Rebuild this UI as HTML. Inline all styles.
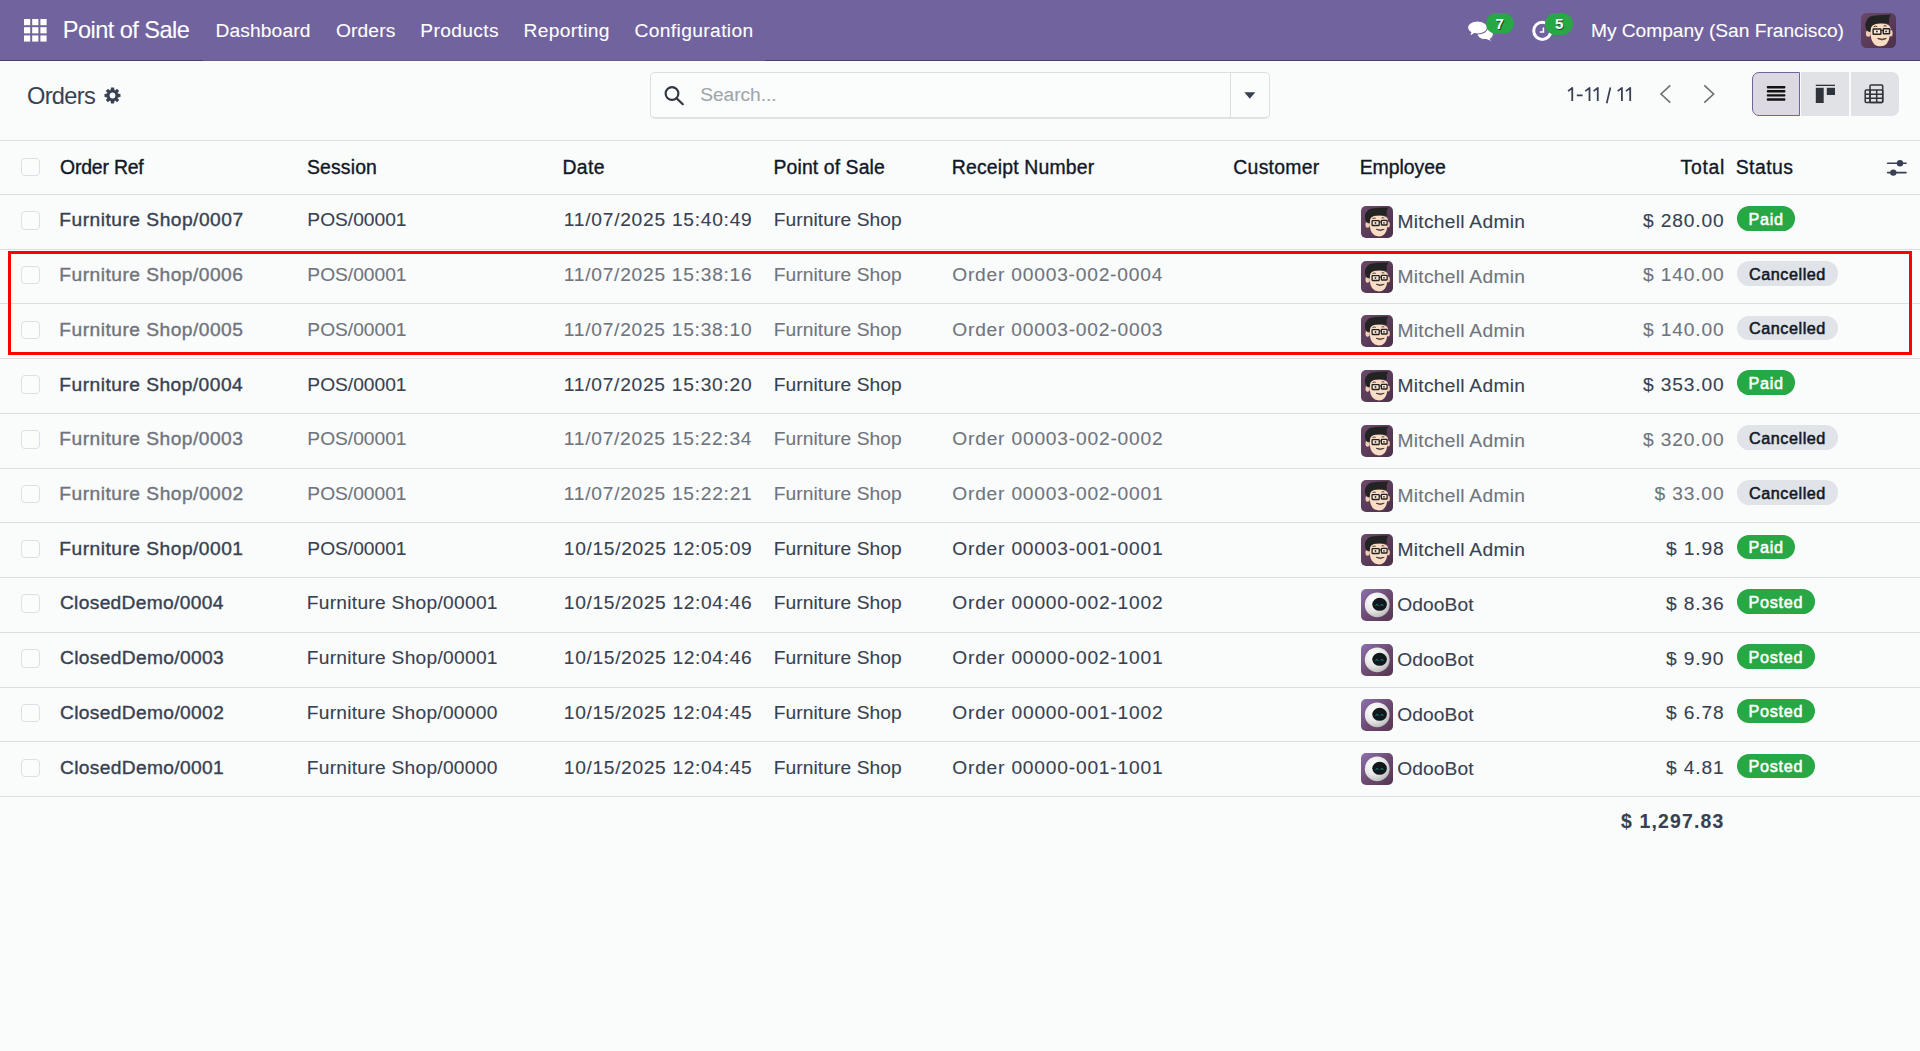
<!DOCTYPE html>
<html><head><meta charset="utf-8">
<style>
*{box-sizing:border-box;margin:0;padding:0}
html,body{width:1920px;height:1051px;overflow:hidden;background:#fafbfb;font-family:"Liberation Sans",sans-serif;position:relative}
.t{position:absolute;white-space:nowrap;line-height:40px;height:40px}
#nav{position:absolute;left:0;top:0;width:1920px;height:61px;background:#71639e}
#nav .bl{position:absolute;top:60px;height:1px}
.line{position:absolute;left:0;width:1920px;height:1px;background:#dcdee3}
.cb{position:absolute;left:21.2px;width:18.4px;height:18.4px;border:1.5px solid #dcdfe4;border-radius:4px;background:#fbfcfc}
.av{position:absolute;left:1360.7px;width:32px;height:32px}
.badge{position:absolute;left:1737px;height:24.6px;border-radius:12.3px;font-weight:700;font-size:16.2px;line-height:24.6px;text-align:center;white-space:nowrap}
.badge.paid{width:58px;background:#28a745;color:#fff}
.badge.posted{width:77.6px;background:#28a745;color:#fff}
.badge.cancelled{width:101px;background:#e0e3e7;color:#111827}
#redbox{position:absolute;left:8px;top:251px;width:1904px;height:104px;border:3px solid #ff0000}
.vs{position:absolute;top:72px;height:44px;background:#e0e2e6}
</style></head><body>
<svg width="0" height="0" style="position:absolute">
<defs>
<linearGradient id="gm" x1="0" y1="0" x2="1" y2="1"><stop offset="0" stop-color="#6a4869"/><stop offset="1" stop-color="#4c3049"/></linearGradient>
<linearGradient id="gb" x1="0" y1="0" x2="1" y2="1"><stop offset="0" stop-color="#8d72b0"/><stop offset="0.5" stop-color="#6d4b73"/><stop offset="1" stop-color="#56354f"/></linearGradient>
<radialGradient id="gh" cx="0.35" cy="0.3" r="0.75"><stop offset="0" stop-color="#ffffff"/><stop offset="0.6" stop-color="#e6e6e6"/><stop offset="1" stop-color="#b9b9b9"/></radialGradient>
<symbol id="mit" viewBox="0 0 32 32">
<rect x="0" y="0" width="32" height="32" rx="5" fill="url(#gm)"/>
<ellipse cx="6.6" cy="18.8" rx="2.1" ry="3" fill="#f3cdb1"/>
<ellipse cx="27.3" cy="18.5" rx="1.6" ry="2.9" fill="#f3cdb1"/>
<path d="M8.4 12 Q7.9 26.5 13.8 29.6 Q17.3 31 21 30 Q26.8 27.5 27 14 Q26.8 9.5 17.5 9.5 Q9 9.5 8.4 12 Z" fill="#f9dcc4"/>
<path d="M4 9.5 Q5.5 3.5 11 2.6 Q18 1.6 27.2 1.6 Q26.6 3.8 25.6 4.8 Q26.2 8 25.4 10 Q21 8.6 15 9.6 Q10.5 10.6 9.3 13 Q8.8 15.5 8.6 17.5 Q6.2 17 5.4 16 Q3.4 13 4 9.5 Z" fill="#232323"/>
<path d="M11.5 12.6 Q13.2 11.6 14.8 12.4 M20.6 12 Q22 11.3 23.3 12.1" stroke="#3a3030" stroke-width="0.9" fill="none"/>
<rect x="11.1" y="14.6" width="7.1" height="4.9" rx="0.5" fill="#fff6ee" fill-opacity="0.5" stroke="#222" stroke-width="1.3"/>
<rect x="20.4" y="14.4" width="5.7" height="4.6" rx="0.5" fill="#fff6ee" fill-opacity="0.4" stroke="#222" stroke-width="1.3"/>
<path d="M18.2 16 L20.4 16" stroke="#222" stroke-width="1"/>
<circle cx="14.5" cy="17" r="0.9" fill="#333"/><circle cx="23" cy="16.8" r="0.9" fill="#333"/>
<path d="M15.2 23.3 Q19.2 26 23.2 23.3 Q19.2 24.5 15.2 23.3 Z" fill="#fff" stroke="#4a3b3b" stroke-width="0.9"/>
</symbol>
<symbol id="bot" viewBox="0 0 32 32">
<rect x="0" y="0" width="32" height="32" rx="5" fill="url(#gb)"/>
<circle cx="16.2" cy="15.8" r="12.4" fill="url(#gh)"/>
<ellipse cx="18.6" cy="15.3" rx="7.3" ry="6.5" fill="#12171b"/>
<path d="M14.8 16.6 Q16 14.2 17.2 16.6" fill="none" stroke="#17b5a6" stroke-width="1"/>
<path d="M19.8 16.6 Q21 14.2 22.2 16.6" fill="none" stroke="#17b5a6" stroke-width="1"/>
</symbol>
</defs></svg>

<div id="nav">
  <div class="bl" style="left:0;width:203px;background:#4b3f72"></div>
  <div class="bl" style="left:203px;width:562px;background:#65598f"></div>
  <div class="bl" style="left:765px;width:1155px;background:#4b3f72"></div>
</div>
<!-- grid icon -->
<svg style="position:absolute;left:24px;top:19px" width="23" height="23" viewBox="0 0 23 23" fill="#fff">
<rect x="0" y="0" width="6.2" height="6.2"/><rect x="8.2" y="0" width="6.2" height="6.2"/><rect x="16.4" y="0" width="6.2" height="6.2"/>
<rect x="0" y="8.2" width="6.2" height="6.2"/><rect x="8.2" y="8.2" width="6.2" height="6.2"/><rect x="16.4" y="8.2" width="6.2" height="6.2"/>
<rect x="0" y="16.4" width="6.2" height="6.2"/><rect x="8.2" y="16.4" width="6.2" height="6.2"/><rect x="16.4" y="16.4" width="6.2" height="6.2"/>
</svg>
<!-- chat icon -->
<svg style="position:absolute;left:1466px;top:18px" width="30" height="26" viewBox="0 0 30 26">
<path d="M17 10 C24 9.5 28 13 27.5 16.5 C27.3 18.5 26 20 24.5 21 L26.8 23.5 C23.5 23.3 21.5 22.5 20 21.5 C15 22 11 19.5 11 16 C11 13 13.5 10.3 17 10 Z" fill="#fff" stroke="#71639e" stroke-width="1.2"/>
<path d="M11.5 3 C17.5 3 21.5 6 21.5 9.5 C21.5 13 17.5 16 11.5 16 C10.5 16 9.3 15.9 8.3 15.6 C7 16.8 5 17.8 2.8 18 C4 16.8 4.5 15.7 4.7 14.6 C2.6 13.3 1.5 11.5 1.5 9.5 C1.5 6 5.5 3 11.5 3 Z" fill="#fff" stroke="#71639e" stroke-width="1.2"/>
</svg>
<div style="position:absolute;left:1485.5px;top:12.8px;width:28.5px;height:21.5px;border-radius:11px;background:#28a745;color:#fff;font-weight:700;font-size:15px;line-height:21.5px;text-align:center;text-shadow:0.8px 0.8px 0 #14461f">7</div>
<!-- clock icon -->
<svg style="position:absolute;left:1530px;top:19px" width="25" height="25" viewBox="0 0 25 25">
<circle cx="12.3" cy="11.8" r="8.6" fill="none" stroke="#fff" stroke-width="3"/>
<path d="M13.4 8.5 V13 H9.8" fill="none" stroke="#fff" stroke-width="1.6"/>
</svg>
<div style="position:absolute;left:1545px;top:13.2px;width:28.4px;height:21.9px;border-radius:11px;background:#28a745;color:#fff;font-weight:700;font-size:15px;line-height:21.9px;text-align:center;text-shadow:0.8px 0.8px 0 #14461f">5</div>
<!-- top avatar -->
<svg style="position:absolute;left:1861px;top:13px" width="35" height="35"><use href="#mit"/></svg>

<!-- gear -->
<svg style="position:absolute;left:104.4px;top:86.6px" width="17" height="17" viewBox="-8.5 -8.5 17 17">
<path d="M-1.67 -5.45 L-1.37 -7.78 L1.37 -7.78 L1.67 -5.45 L2.68 -5.03 L4.53 -6.47 L6.47 -4.53 L5.03 -2.68 L5.45 -1.67 L7.78 -1.37 L7.78 1.37 L5.45 1.67 L5.03 2.68 L6.47 4.53 L4.53 6.47 L2.68 5.03 L1.67 5.45 L1.37 7.78 L-1.37 7.78 L-1.67 5.45 L-2.68 5.03 L-4.53 6.47 L-6.47 4.53 L-5.03 2.68 L-5.45 1.67 L-7.78 1.37 L-7.78 -1.37 L-5.45 -1.67 L-5.03 -2.68 L-6.47 -4.53 L-4.53 -6.47 L-2.68 -5.03 Z" fill="#374151" stroke="#374151" stroke-width="0.4" stroke-linejoin="round"/>
<circle r="2.9" fill="#fafbfb"/>
</svg>
<!-- search box -->
<div style="position:absolute;left:650px;top:72px;width:620px;height:47px;border:1px solid #dcdee2;border-bottom:2px solid #dfe1e5;border-radius:5px;background:#fbfcfc"></div>
<div style="position:absolute;left:1230px;top:73px;width:1px;height:45px;background:#dcdee2"></div>
<svg style="position:absolute;left:662px;top:84px" width="24" height="24" viewBox="0 0 24 24">
<circle cx="10" cy="9.5" r="6.4" fill="none" stroke="#2f3640" stroke-width="2.1"/>
<path d="M14.6 14.2 L20.8 20.2" stroke="#2f3640" stroke-width="2.2" stroke-linecap="round"/>
</svg>
<svg style="position:absolute;left:1244px;top:92px" width="12" height="8" viewBox="0 0 12 8"><path d="M0.3 0.3 H11.3 L5.8 6.8 Z" fill="#374151"/></svg>
<!-- pager chevrons -->
<svg style="position:absolute;left:1656px;top:83px" width="64" height="22" viewBox="0 0 64 22">
<path d="M14.3 2.3 L5 11 L14.3 19.6" fill="none" stroke="#6b6f76" stroke-width="1.6"/>
<path d="M48.3 2.3 L57.6 11 L48.3 19.6" fill="none" stroke="#6b6f76" stroke-width="1.6"/>
</svg>
<!-- view switcher -->
<div class="vs" style="left:1752px;width:48px;border:1.5px solid #71639e;border-radius:7px 0 0 7px;background:#dcd9e3"></div>
<div class="vs" style="left:1801px;width:48px;"></div>
<div class="vs" style="left:1850.8px;width:48px;border-radius:0 7px 7px 0"></div>
<svg style="position:absolute;left:1766px;top:85px" width="20" height="17" viewBox="0 0 20 17" fill="#111">
<rect x="0.8" y="1" width="18.6" height="2.4" rx="0.8"/><rect x="0.8" y="5.1" width="18.6" height="2.4" rx="0.8"/><rect x="0.8" y="9.2" width="18.6" height="2.4" rx="0.8"/><rect x="0.8" y="13.3" width="18.6" height="2.4" rx="0.8"/>
</svg>
<svg style="position:absolute;left:1815px;top:84px" width="22" height="20" viewBox="0 0 22 20" fill="#2f343b">
<rect x="0.8" y="0.7" width="19.2" height="1.3"/><rect x="0.8" y="3.8" width="7.9" height="15.2"/><rect x="11.8" y="3.8" width="8.2" height="7.2"/>
</svg>
<svg style="position:absolute;left:1864px;top:84px" width="21" height="20" viewBox="0 0 21 20">
<g fill="none" stroke="#2f343b" stroke-width="1.5">
<rect x="6" y="1" width="12.7" height="17.6" rx="1"/>
<rect x="1.2" y="6" width="17.5" height="12.6" rx="1"/>
<path d="M1.2 10.3 H18.7 M1.2 14.3 H18.7 M6 6 V18.6 M12.7 6 V18.6"/>
</g>
</svg>

<!-- table lines -->
<div class="line" style="top:140px"></div>
<div class="line" style="top:194px"></div>
<div class="cb" style="top:158px"></div>
<svg style="position:absolute;left:1885px;top:157px" width="24" height="20" viewBox="0 0 24 20">
<g stroke="#374151" stroke-width="1.6" stroke-linecap="round"><path d="M2.6 6.3 H21"/><path d="M2.6 15.6 H21"/></g>
<circle cx="15" cy="6.3" r="3.2" fill="#374151"/><circle cx="8.3" cy="15.6" r="3.2" fill="#374151"/>
</svg>

<div class="t" style="left:62.71px;top:10.41px;font-size:23.6px;color:#ffffff;letter-spacing:-0.555px;-webkit-text-stroke:0.1px #ffffff">Point of Sale</div>
<div class="t" style="left:215.46px;top:10.64px;font-size:19.2px;color:#ffffff;letter-spacing:0.137px;-webkit-text-stroke:0.1px #ffffff">Dashboard</div>
<div class="t" style="left:335.94px;top:10.64px;font-size:19.2px;color:#ffffff;letter-spacing:0.136px;-webkit-text-stroke:0.1px #ffffff">Orders</div>
<div class="t" style="left:420.36px;top:10.64px;font-size:19.2px;color:#ffffff;letter-spacing:0.352px;-webkit-text-stroke:0.1px #ffffff">Products</div>
<div class="t" style="left:523.46px;top:10.64px;font-size:19.2px;color:#ffffff;letter-spacing:0.357px;-webkit-text-stroke:0.1px #ffffff">Reporting</div>
<div class="t" style="left:634.44px;top:10.64px;font-size:19.2px;color:#ffffff;letter-spacing:0.389px;-webkit-text-stroke:0.1px #ffffff">Configuration</div>
<div class="t" style="left:1590.96px;top:10.64px;font-size:19.2px;color:#ffffff;letter-spacing:-0.029px;-webkit-text-stroke:0.1px #ffffff">My Company (San Francisco)</div>
<div class="t" style="left:26.94px;top:75.81px;font-size:23.6px;color:#374151;letter-spacing:-0.642px;-webkit-text-stroke:0px #374151">Orders</div>
<div class="t" style="left:700.14px;top:75.14px;font-size:19.2px;color:#a1a5ac;letter-spacing:-0.026px;-webkit-text-stroke:0.1px #a1a5ac">Search...</div>
<svg style="position:absolute;left:0;top:0" width="1700" height="110"><path d="M1568.05 91.1 L1572.25 87.9 V100.9 M1585.30 91.1 L1589.50 87.9 V100.9 M1593.55 91.1 L1597.75 87.9 V100.9 M1617.70 91.1 L1621.90 87.9 V100.9 M1626.00 91.1 L1630.20 87.9 V100.9 " fill="none" stroke="#374151" stroke-width="1.8" stroke-linejoin="round"/><path d="M1576.8 95.35 H1582.6 M1610.4 87.5 L1606.7 103.2" fill="none" stroke="#374151" stroke-width="1.7"/></svg>
<div class="t" style="left:60.03px;top:147.27px;font-size:19.4px;color:#111827;letter-spacing:-0.174px;-webkit-text-stroke:0.36px #111827">Order Ref</div>
<div class="t" style="left:306.93px;top:147.27px;font-size:19.4px;color:#111827;letter-spacing:0.161px;-webkit-text-stroke:0.36px #111827">Session</div>
<div class="t" style="left:562.45px;top:147.27px;font-size:19.4px;color:#111827;letter-spacing:0.397px;-webkit-text-stroke:0.36px #111827">Date</div>
<div class="t" style="left:773.55px;top:147.27px;font-size:19.4px;color:#111827;letter-spacing:0.102px;-webkit-text-stroke:0.36px #111827">Point of Sale</div>
<div class="t" style="left:951.85px;top:147.27px;font-size:19.4px;color:#111827;letter-spacing:0.167px;-webkit-text-stroke:0.36px #111827">Receipt Number</div>
<div class="t" style="left:1233.33px;top:147.27px;font-size:19.4px;color:#111827;letter-spacing:0.266px;-webkit-text-stroke:0.36px #111827">Customer</div>
<div class="t" style="left:1359.65px;top:147.27px;font-size:19.4px;color:#111827;letter-spacing:-0.001px;-webkit-text-stroke:0.36px #111827">Employee</div>
<div class="t" style="left:1735.73px;top:147.27px;font-size:19.4px;color:#111827;letter-spacing:0.471px;-webkit-text-stroke:0.36px #111827">Status</div>
<div class="t" style="left:1680.61px;top:147.27px;font-size:19.4px;color:#111827;letter-spacing:0.679px;-webkit-text-stroke:0.36px #111827">Total</div>
<div class="line" style="top:248.73px"></div>
<div class="cb" style="top:211.30px"></div>
<div class="t" style="left:59.36px;top:200.34px;font-size:19.2px;color:#374151;letter-spacing:0.488px;-webkit-text-stroke:0.38px #374151">Furniture Shop/0007</div>
<div class="t" style="left:307.36px;top:200.34px;font-size:19.2px;color:#374151;letter-spacing:-0.008px;-webkit-text-stroke:0.1px #374151">POS/00001</div>
<div class="t" style="left:563.86px;top:200.34px;font-size:19.2px;color:#374151;letter-spacing:0.738px;-webkit-text-stroke:0.1px #374151">11/07/2025 15:40:49</div>
<div class="t" style="left:773.76px;top:200.34px;font-size:19.2px;color:#374151;letter-spacing:0.077px;-webkit-text-stroke:0.1px #374151">Furniture Shop</div>
<svg class="av" style="top:206.00px"><use href="#mit"/></svg>
<div class="t" style="left:1397.46px;top:201.94px;font-size:19.2px;color:#374151;letter-spacing:0.288px;-webkit-text-stroke:0.1px #374151">Mitchell Admin</div>
<div class="t" style="left:1643.01px;top:200.74px;font-size:19.2px;color:#374151;letter-spacing:0.839px;-webkit-text-stroke:0.1px #374151">$ 280.00</div>
<div class="badge paid" style="top:206.30px"></div>
<div class="t" style="left:1748.50px;top:198.88px;font-size:16.2px;color:#ffffff;letter-spacing:0.683px;-webkit-text-stroke:0.55px #ffffff">Paid</div>
<div class="line" style="top:303.46px"></div>
<div class="cb" style="top:266.03px"></div>
<div class="t" style="left:59.36px;top:255.07px;font-size:19.2px;color:#6f747d;letter-spacing:0.478px;-webkit-text-stroke:0.38px #6f747d">Furniture Shop/0006</div>
<div class="t" style="left:307.36px;top:255.07px;font-size:19.2px;color:#6f747d;letter-spacing:-0.008px;-webkit-text-stroke:0.1px #6f747d">POS/00001</div>
<div class="t" style="left:563.86px;top:255.07px;font-size:19.2px;color:#6f747d;letter-spacing:0.733px;-webkit-text-stroke:0.1px #6f747d">11/07/2025 15:38:16</div>
<div class="t" style="left:773.76px;top:255.07px;font-size:19.2px;color:#6f747d;letter-spacing:0.077px;-webkit-text-stroke:0.1px #6f747d">Furniture Shop</div>
<div class="t" style="left:952.24px;top:255.07px;font-size:19.2px;color:#6f747d;letter-spacing:0.783px;-webkit-text-stroke:0.1px #6f747d">Order 00003-002-0004</div>
<svg class="av" style="top:260.73px"><use href="#mit"/></svg>
<div class="t" style="left:1397.46px;top:256.67px;font-size:19.2px;color:#6f747d;letter-spacing:0.288px;-webkit-text-stroke:0.1px #6f747d">Mitchell Admin</div>
<div class="t" style="left:1643.01px;top:255.47px;font-size:19.2px;color:#6f747d;letter-spacing:0.839px;-webkit-text-stroke:0.1px #6f747d">$ 140.00</div>
<div class="badge cancelled" style="top:261.03px"></div>
<div class="t" style="left:1748.99px;top:253.61px;font-size:16.2px;color:#111827;letter-spacing:0.544px;-webkit-text-stroke:0.55px #111827">Cancelled</div>
<div class="line" style="top:358.19px"></div>
<div class="cb" style="top:320.76px"></div>
<div class="t" style="left:59.36px;top:309.80px;font-size:19.2px;color:#6f747d;letter-spacing:0.478px;-webkit-text-stroke:0.38px #6f747d">Furniture Shop/0005</div>
<div class="t" style="left:307.36px;top:309.80px;font-size:19.2px;color:#6f747d;letter-spacing:-0.008px;-webkit-text-stroke:0.1px #6f747d">POS/00001</div>
<div class="t" style="left:563.86px;top:309.80px;font-size:19.2px;color:#6f747d;letter-spacing:0.727px;-webkit-text-stroke:0.1px #6f747d">11/07/2025 15:38:10</div>
<div class="t" style="left:773.76px;top:309.80px;font-size:19.2px;color:#6f747d;letter-spacing:0.077px;-webkit-text-stroke:0.1px #6f747d">Furniture Shop</div>
<div class="t" style="left:952.24px;top:309.80px;font-size:19.2px;color:#6f747d;letter-spacing:0.793px;-webkit-text-stroke:0.1px #6f747d">Order 00003-002-0003</div>
<svg class="av" style="top:315.46px"><use href="#mit"/></svg>
<div class="t" style="left:1397.46px;top:311.40px;font-size:19.2px;color:#6f747d;letter-spacing:0.288px;-webkit-text-stroke:0.1px #6f747d">Mitchell Admin</div>
<div class="t" style="left:1643.01px;top:310.20px;font-size:19.2px;color:#6f747d;letter-spacing:0.839px;-webkit-text-stroke:0.1px #6f747d">$ 140.00</div>
<div class="badge cancelled" style="top:315.76px"></div>
<div class="t" style="left:1748.99px;top:308.34px;font-size:16.2px;color:#111827;letter-spacing:0.544px;-webkit-text-stroke:0.55px #111827">Cancelled</div>
<div class="line" style="top:412.92px"></div>
<div class="cb" style="top:375.49px"></div>
<div class="t" style="left:59.36px;top:364.53px;font-size:19.2px;color:#374151;letter-spacing:0.467px;-webkit-text-stroke:0.38px #374151">Furniture Shop/0004</div>
<div class="t" style="left:307.36px;top:364.53px;font-size:19.2px;color:#374151;letter-spacing:-0.008px;-webkit-text-stroke:0.1px #374151">POS/00001</div>
<div class="t" style="left:563.86px;top:364.53px;font-size:19.2px;color:#374151;letter-spacing:0.727px;-webkit-text-stroke:0.1px #374151">11/07/2025 15:30:20</div>
<div class="t" style="left:773.76px;top:364.53px;font-size:19.2px;color:#374151;letter-spacing:0.077px;-webkit-text-stroke:0.1px #374151">Furniture Shop</div>
<svg class="av" style="top:370.19px"><use href="#mit"/></svg>
<div class="t" style="left:1397.46px;top:366.13px;font-size:19.2px;color:#374151;letter-spacing:0.288px;-webkit-text-stroke:0.1px #374151">Mitchell Admin</div>
<div class="t" style="left:1643.01px;top:364.93px;font-size:19.2px;color:#374151;letter-spacing:0.839px;-webkit-text-stroke:0.1px #374151">$ 353.00</div>
<div class="badge paid" style="top:370.49px"></div>
<div class="t" style="left:1748.50px;top:363.07px;font-size:16.2px;color:#ffffff;letter-spacing:0.683px;-webkit-text-stroke:0.55px #ffffff">Paid</div>
<div class="line" style="top:467.65px"></div>
<div class="cb" style="top:430.22px"></div>
<div class="t" style="left:59.36px;top:419.26px;font-size:19.2px;color:#6f747d;letter-spacing:0.478px;-webkit-text-stroke:0.38px #6f747d">Furniture Shop/0003</div>
<div class="t" style="left:307.36px;top:419.26px;font-size:19.2px;color:#6f747d;letter-spacing:-0.008px;-webkit-text-stroke:0.1px #6f747d">POS/00001</div>
<div class="t" style="left:563.86px;top:419.26px;font-size:19.2px;color:#6f747d;letter-spacing:0.722px;-webkit-text-stroke:0.1px #6f747d">11/07/2025 15:22:34</div>
<div class="t" style="left:773.76px;top:419.26px;font-size:19.2px;color:#6f747d;letter-spacing:0.077px;-webkit-text-stroke:0.1px #6f747d">Furniture Shop</div>
<div class="t" style="left:952.24px;top:419.26px;font-size:19.2px;color:#6f747d;letter-spacing:0.803px;-webkit-text-stroke:0.1px #6f747d">Order 00003-002-0002</div>
<svg class="av" style="top:424.92px"><use href="#mit"/></svg>
<div class="t" style="left:1397.46px;top:420.86px;font-size:19.2px;color:#6f747d;letter-spacing:0.288px;-webkit-text-stroke:0.1px #6f747d">Mitchell Admin</div>
<div class="t" style="left:1643.01px;top:419.66px;font-size:19.2px;color:#6f747d;letter-spacing:0.839px;-webkit-text-stroke:0.1px #6f747d">$ 320.00</div>
<div class="badge cancelled" style="top:425.22px"></div>
<div class="t" style="left:1748.99px;top:417.80px;font-size:16.2px;color:#111827;letter-spacing:0.544px;-webkit-text-stroke:0.55px #111827">Cancelled</div>
<div class="line" style="top:522.38px"></div>
<div class="cb" style="top:484.95px"></div>
<div class="t" style="left:59.36px;top:473.99px;font-size:19.2px;color:#6f747d;letter-spacing:0.488px;-webkit-text-stroke:0.38px #6f747d">Furniture Shop/0002</div>
<div class="t" style="left:307.36px;top:473.99px;font-size:19.2px;color:#6f747d;letter-spacing:-0.008px;-webkit-text-stroke:0.1px #6f747d">POS/00001</div>
<div class="t" style="left:563.86px;top:473.99px;font-size:19.2px;color:#6f747d;letter-spacing:0.738px;-webkit-text-stroke:0.1px #6f747d">11/07/2025 15:22:21</div>
<div class="t" style="left:773.76px;top:473.99px;font-size:19.2px;color:#6f747d;letter-spacing:0.077px;-webkit-text-stroke:0.1px #6f747d">Furniture Shop</div>
<div class="t" style="left:952.24px;top:473.99px;font-size:19.2px;color:#6f747d;letter-spacing:0.798px;-webkit-text-stroke:0.1px #6f747d">Order 00003-002-0001</div>
<svg class="av" style="top:479.65px"><use href="#mit"/></svg>
<div class="t" style="left:1397.46px;top:475.59px;font-size:19.2px;color:#6f747d;letter-spacing:0.288px;-webkit-text-stroke:0.1px #6f747d">Mitchell Admin</div>
<div class="t" style="left:1654.51px;top:474.39px;font-size:19.2px;color:#6f747d;letter-spacing:0.839px;-webkit-text-stroke:0.1px #6f747d">$ 33.00</div>
<div class="badge cancelled" style="top:479.95px"></div>
<div class="t" style="left:1748.99px;top:472.53px;font-size:16.2px;color:#111827;letter-spacing:0.544px;-webkit-text-stroke:0.55px #111827">Cancelled</div>
<div class="line" style="top:577.11px"></div>
<div class="cb" style="top:539.68px"></div>
<div class="t" style="left:59.36px;top:528.72px;font-size:19.2px;color:#374151;letter-spacing:0.483px;-webkit-text-stroke:0.38px #374151">Furniture Shop/0001</div>
<div class="t" style="left:307.36px;top:528.72px;font-size:19.2px;color:#374151;letter-spacing:-0.008px;-webkit-text-stroke:0.1px #374151">POS/00001</div>
<div class="t" style="left:563.86px;top:528.72px;font-size:19.2px;color:#374151;letter-spacing:0.658px;-webkit-text-stroke:0.1px #374151">10/15/2025 12:05:09</div>
<div class="t" style="left:773.76px;top:528.72px;font-size:19.2px;color:#374151;letter-spacing:0.077px;-webkit-text-stroke:0.1px #374151">Furniture Shop</div>
<div class="t" style="left:952.24px;top:528.72px;font-size:19.2px;color:#374151;letter-spacing:0.798px;-webkit-text-stroke:0.1px #374151">Order 00003-001-0001</div>
<svg class="av" style="top:534.38px"><use href="#mit"/></svg>
<div class="t" style="left:1397.46px;top:530.32px;font-size:19.2px;color:#374151;letter-spacing:0.288px;-webkit-text-stroke:0.1px #374151">Mitchell Admin</div>
<div class="t" style="left:1666.01px;top:529.12px;font-size:19.2px;color:#374151;letter-spacing:0.857px;-webkit-text-stroke:0.1px #374151">$ 1.98</div>
<div class="badge paid" style="top:534.68px"></div>
<div class="t" style="left:1748.50px;top:527.26px;font-size:16.2px;color:#ffffff;letter-spacing:0.683px;-webkit-text-stroke:0.55px #ffffff">Paid</div>
<div class="line" style="top:631.84px"></div>
<div class="cb" style="top:594.41px"></div>
<div class="t" style="left:59.94px;top:583.45px;font-size:19.2px;color:#374151;letter-spacing:0.326px;-webkit-text-stroke:0.38px #374151">ClosedDemo/0004</div>
<div class="t" style="left:306.76px;top:583.45px;font-size:19.2px;color:#374151;letter-spacing:0.271px;-webkit-text-stroke:0.1px #374151">Furniture Shop/00001</div>
<div class="t" style="left:563.86px;top:583.45px;font-size:19.2px;color:#374151;letter-spacing:0.653px;-webkit-text-stroke:0.1px #374151">10/15/2025 12:04:46</div>
<div class="t" style="left:773.76px;top:583.45px;font-size:19.2px;color:#374151;letter-spacing:0.077px;-webkit-text-stroke:0.1px #374151">Furniture Shop</div>
<div class="t" style="left:952.24px;top:583.45px;font-size:19.2px;color:#374151;letter-spacing:0.803px;-webkit-text-stroke:0.1px #374151">Order 00000-002-1002</div>
<svg class="av" style="top:589.11px"><use href="#bot"/></svg>
<div class="t" style="left:1397.24px;top:585.05px;font-size:19.2px;color:#374151;letter-spacing:0.103px;-webkit-text-stroke:0.1px #374151">OdooBot</div>
<div class="t" style="left:1666.01px;top:583.85px;font-size:19.2px;color:#374151;letter-spacing:0.857px;-webkit-text-stroke:0.1px #374151">$ 8.36</div>
<div class="badge posted" style="top:589.41px"></div>
<div class="t" style="left:1748.50px;top:581.99px;font-size:16.2px;color:#ffffff;letter-spacing:0.733px;-webkit-text-stroke:0.55px #ffffff">Posted</div>
<div class="line" style="top:686.57px"></div>
<div class="cb" style="top:649.14px"></div>
<div class="t" style="left:59.94px;top:638.18px;font-size:19.2px;color:#374151;letter-spacing:0.339px;-webkit-text-stroke:0.38px #374151">ClosedDemo/0003</div>
<div class="t" style="left:306.76px;top:638.18px;font-size:19.2px;color:#374151;letter-spacing:0.271px;-webkit-text-stroke:0.1px #374151">Furniture Shop/00001</div>
<div class="t" style="left:563.86px;top:638.18px;font-size:19.2px;color:#374151;letter-spacing:0.653px;-webkit-text-stroke:0.1px #374151">10/15/2025 12:04:46</div>
<div class="t" style="left:773.76px;top:638.18px;font-size:19.2px;color:#374151;letter-spacing:0.077px;-webkit-text-stroke:0.1px #374151">Furniture Shop</div>
<div class="t" style="left:952.24px;top:638.18px;font-size:19.2px;color:#374151;letter-spacing:0.798px;-webkit-text-stroke:0.1px #374151">Order 00000-002-1001</div>
<svg class="av" style="top:643.84px"><use href="#bot"/></svg>
<div class="t" style="left:1397.24px;top:639.78px;font-size:19.2px;color:#374151;letter-spacing:0.103px;-webkit-text-stroke:0.1px #374151">OdooBot</div>
<div class="t" style="left:1666.01px;top:638.58px;font-size:19.2px;color:#374151;letter-spacing:0.838px;-webkit-text-stroke:0.1px #374151">$ 9.90</div>
<div class="badge posted" style="top:644.14px"></div>
<div class="t" style="left:1748.50px;top:636.72px;font-size:16.2px;color:#ffffff;letter-spacing:0.733px;-webkit-text-stroke:0.55px #ffffff">Posted</div>
<div class="line" style="top:741.30px"></div>
<div class="cb" style="top:703.87px"></div>
<div class="t" style="left:59.94px;top:692.91px;font-size:19.2px;color:#374151;letter-spacing:0.353px;-webkit-text-stroke:0.38px #374151">ClosedDemo/0002</div>
<div class="t" style="left:306.76px;top:692.91px;font-size:19.2px;color:#374151;letter-spacing:0.260px;-webkit-text-stroke:0.1px #374151">Furniture Shop/00000</div>
<div class="t" style="left:563.86px;top:692.91px;font-size:19.2px;color:#374151;letter-spacing:0.653px;-webkit-text-stroke:0.1px #374151">10/15/2025 12:04:45</div>
<div class="t" style="left:773.76px;top:692.91px;font-size:19.2px;color:#374151;letter-spacing:0.077px;-webkit-text-stroke:0.1px #374151">Furniture Shop</div>
<div class="t" style="left:952.24px;top:692.91px;font-size:19.2px;color:#374151;letter-spacing:0.803px;-webkit-text-stroke:0.1px #374151">Order 00000-001-1002</div>
<svg class="av" style="top:698.57px"><use href="#bot"/></svg>
<div class="t" style="left:1397.24px;top:694.51px;font-size:19.2px;color:#374151;letter-spacing:0.103px;-webkit-text-stroke:0.1px #374151">OdooBot</div>
<div class="t" style="left:1666.01px;top:693.31px;font-size:19.2px;color:#374151;letter-spacing:0.857px;-webkit-text-stroke:0.1px #374151">$ 6.78</div>
<div class="badge posted" style="top:698.87px"></div>
<div class="t" style="left:1748.50px;top:691.45px;font-size:16.2px;color:#ffffff;letter-spacing:0.733px;-webkit-text-stroke:0.55px #ffffff">Posted</div>
<div class="line" style="top:796.03px"></div>
<div class="cb" style="top:758.60px"></div>
<div class="t" style="left:59.94px;top:747.64px;font-size:19.2px;color:#374151;letter-spacing:0.346px;-webkit-text-stroke:0.38px #374151">ClosedDemo/0001</div>
<div class="t" style="left:306.76px;top:747.64px;font-size:19.2px;color:#374151;letter-spacing:0.260px;-webkit-text-stroke:0.1px #374151">Furniture Shop/00000</div>
<div class="t" style="left:563.86px;top:747.64px;font-size:19.2px;color:#374151;letter-spacing:0.653px;-webkit-text-stroke:0.1px #374151">10/15/2025 12:04:45</div>
<div class="t" style="left:773.76px;top:747.64px;font-size:19.2px;color:#374151;letter-spacing:0.077px;-webkit-text-stroke:0.1px #374151">Furniture Shop</div>
<div class="t" style="left:952.24px;top:747.64px;font-size:19.2px;color:#374151;letter-spacing:0.798px;-webkit-text-stroke:0.1px #374151">Order 00000-001-1001</div>
<svg class="av" style="top:753.30px"><use href="#bot"/></svg>
<div class="t" style="left:1397.24px;top:749.24px;font-size:19.2px;color:#374151;letter-spacing:0.103px;-webkit-text-stroke:0.1px #374151">OdooBot</div>
<div class="t" style="left:1666.01px;top:748.04px;font-size:19.2px;color:#374151;letter-spacing:0.876px;-webkit-text-stroke:0.1px #374151">$ 4.81</div>
<div class="badge posted" style="top:753.60px"></div>
<div class="t" style="left:1748.50px;top:746.18px;font-size:16.2px;color:#ffffff;letter-spacing:0.733px;-webkit-text-stroke:0.55px #ffffff">Posted</div>
<div class="t" style="left:1620.91px;top:801.37px;font-size:19.4px;font-weight:700;color:#374151;letter-spacing:1.201px;-webkit-text-stroke:0.1px #374151">$ 1,297.83</div>

<div id="redbox"></div>
</body></html>
